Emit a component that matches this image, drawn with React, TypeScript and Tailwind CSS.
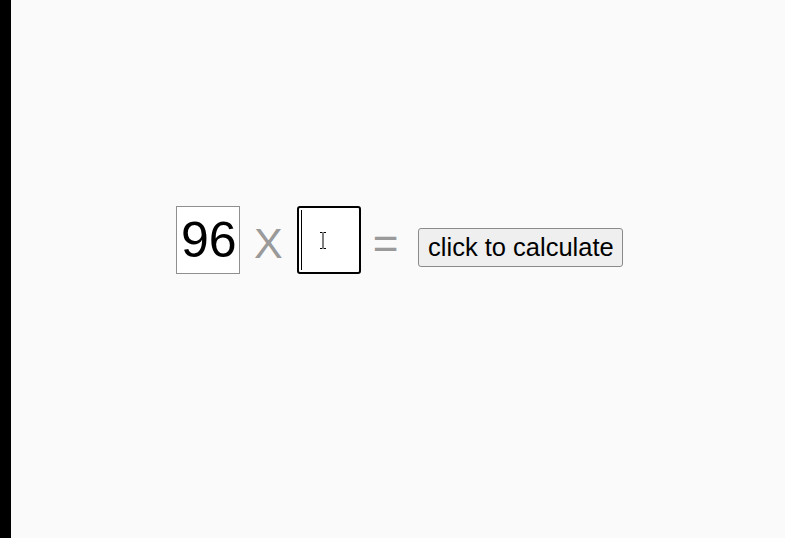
import React from "react";

const font = { fontFamily: '"Liberation Sans", Arial, sans-serif' };

// Mouse I-beam shown over the focused box
const IBeam = () => (
  <svg width="8" height="17" viewBox="0 0 8 17" className="absolute left-[20px] top-[24px]">
    <path d="M1 0.5h2.5M4.5 0.5h2.5M4 1v15M1 16.5h2.5M4.5 16.5h2.5" stroke="#000" strokeWidth="1" fill="none" />
  </svg>
);

export default function App() {
  return (
    <div className="flex h-[538px] w-full bg-[#fafafa]" style={font}>
      <div className="w-[11px] shrink-0 bg-black" />
      <div className="flex flex-1 items-start pl-[165px] pt-[206px]">
        {/* first factor */}
        <input
          readOnly
          value="96"
          className="h-[68px] w-[64px] border border-[#8f8f8f] bg-white px-[4px] text-[50px] leading-none text-black outline-none"
          style={font}
        />

        <span className="ml-[14px] mt-[16px] text-[43px] leading-none text-[#9a9a9a]">X</span>

        {/* second factor, focused */}
        <div className="relative ml-[14px] h-[68px] w-[64px] rounded-[3px] border-2 border-black bg-white">
          <span className="absolute left-[2px] top-[2px] h-[60px] w-[1px] bg-black" />
          <IBeam />
        </div>

        <span className="ml-[12px] mt-[16px] text-[44px] leading-none text-[#9a9a9a]">=</span>

        <button
          className="ml-[20px] mt-[22px] h-[39px] w-[205px] rounded-[3px] border border-[#8a8a8a] bg-[#efefef] text-[25.5px] leading-none text-black"
          style={font}
        >
          click to calculate
        </button>
      </div>
    </div>
  );
}
